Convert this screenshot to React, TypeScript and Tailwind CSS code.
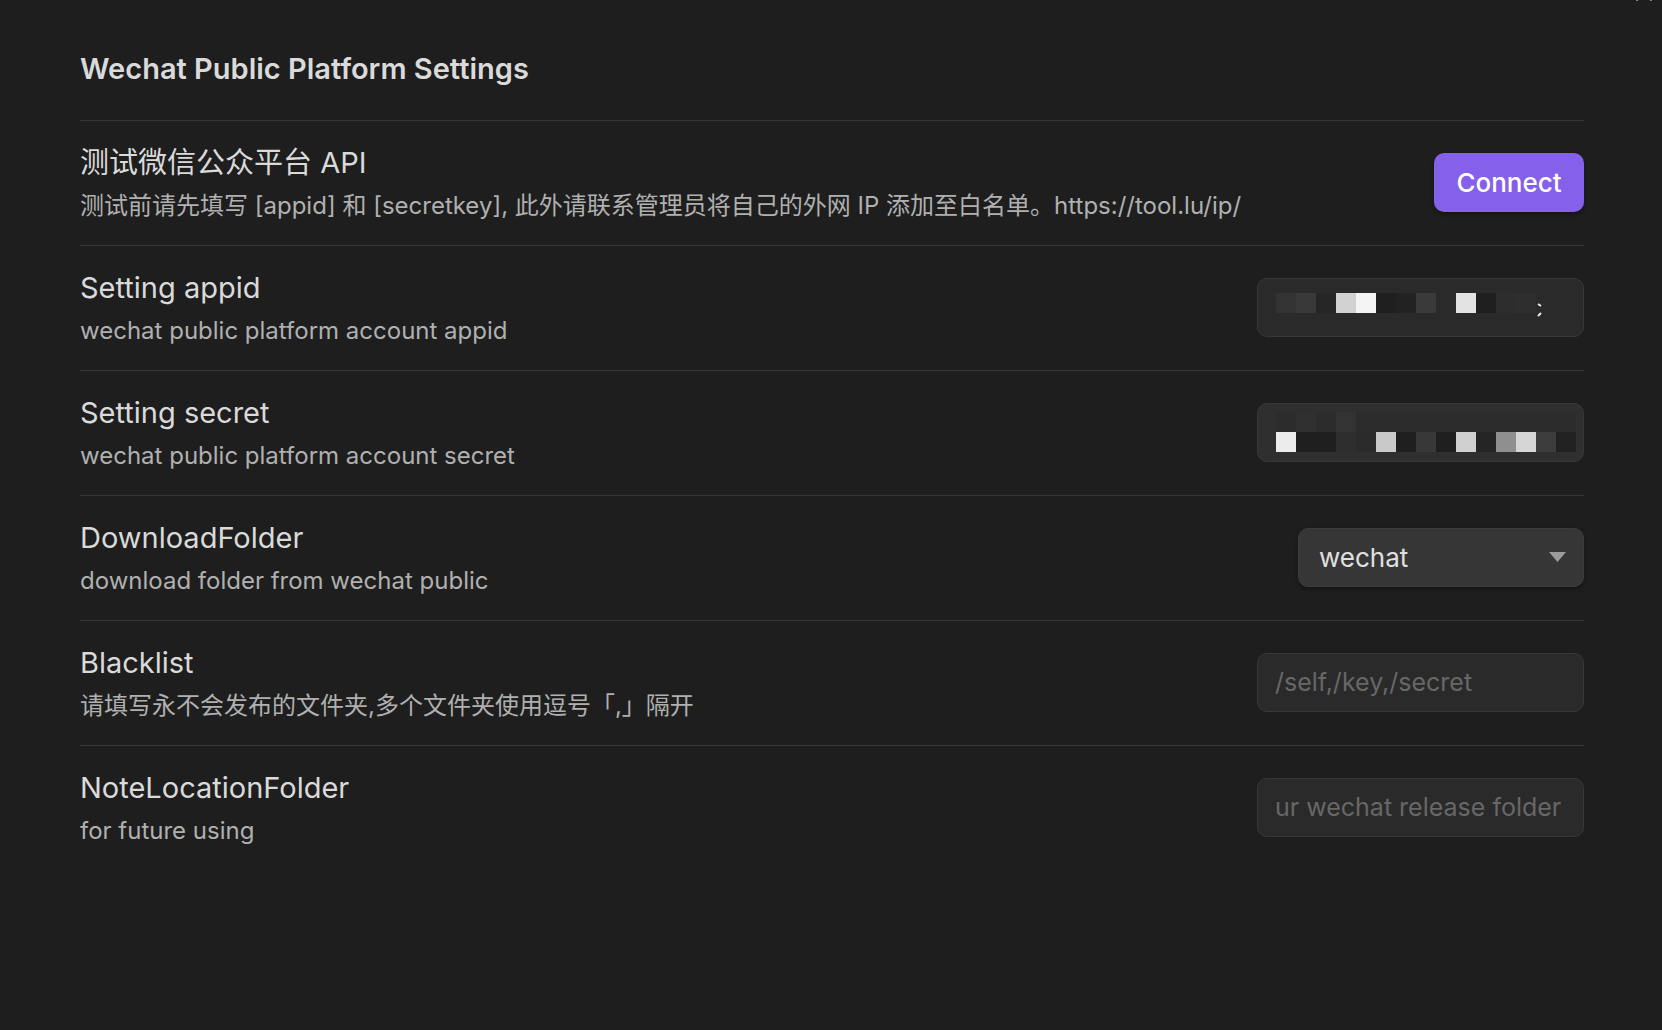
import type { ReactNode } from 'react'

const appidBlocks = [
  'bg-[#333333]',
  'bg-[#393939]',
  'bg-[#262626]',
  'bg-[#d2d2d2]',
  'bg-[#f4f4f4]',
  'bg-[#1f1f1f]',
  'bg-[#222222]',
  'bg-[#3a3a3a]',
  'bg-[#2a2a2a]',
  'bg-[#e3e3e3]',
  'bg-[#1f1f1f]',
  'bg-[#2d2d2d]',
  'bg-[#2e2e2e]',
]

const secretTop = [
  'bg-[#2c2c2c]',
  'bg-[#303030]',
  'bg-[#2c2c2c]',
  'bg-[#333333]',
  'bg-[#2c2c2c]',
  'bg-[#2c2c2c]',
  'bg-[#2c2c2c]',
  'bg-[#2c2c2c]',
  'bg-[#2c2c2c]',
  'bg-[#2c2c2c]',
  'bg-[#2c2c2c]',
  'bg-[#2c2c2c]',
  'bg-[#2c2c2c]',
  'bg-[#2c2c2c]',
  'bg-[#2c2c2c]',
]

const secretBottom = [
  'bg-[#ececec]',
  'bg-[#1f1f1f]',
  'bg-[#1f1f1f]',
  'bg-[#2e2e2e]',
  'bg-[#2a2a2a]',
  'bg-[#c9c9c9]',
  'bg-[#1f1f1f]',
  'bg-[#383838]',
  'bg-[#1f1f1f]',
  'bg-[#d0d0d0]',
  'bg-[#252525]',
  'bg-[#8f8f8f]',
  'bg-[#d6d6d6]',
  'bg-[#3d3d3d]',
  'bg-[#222222]',
]

function SettingRow({
  name,
  desc,
  children,
}: {
  name: string
  desc: string
  children: ReactNode
}) {
  return (
    <div className="flex items-center gap-8 border-t border-[#363636] pt-[23px] pb-[22px]">
      <div className="min-w-0 flex-1">
        <div className="text-[29px] leading-[38px] text-[#dadada]">{name}</div>
        <div className="mt-[7px] text-[24px] leading-[34px] text-[#b0b0b0]">{desc}</div>
      </div>
      <div className="mb-[3px] shrink-0">{children}</div>
    </div>
  )
}

function TextInput({ placeholder }: { placeholder: string }) {
  return (
    <input
      type="text"
      placeholder={placeholder}
      className="h-[59px] w-[327px] rounded-[10px] border border-[#383838] bg-[#2a2a2a] px-[17px] text-[25px] text-[#dadada] outline-none placeholder:text-[#676767]"
    />
  )
}

export default function App() {
  return (
    <div className="relative min-h-screen overflow-hidden bg-[#1e1e1e] font-[Inter,'Noto_Sans_CJK_SC',sans-serif]">
      {/* close button, mostly cut off */}
      <svg
        className="absolute right-[9px] top-[-16px]"
        width="18"
        height="18"
        viewBox="0 0 18 18"
        fill="none"
        stroke="#9a9a9a"
        strokeWidth="2"
        strokeLinecap="round"
      >
        <path d="M2 2l14 14M16 2L2 16" />
      </svg>

      <div className="pl-[80px] pr-[78px]">
        <h2 className="pt-[49px] pb-[31px] text-[29px] leading-[40px] font-semibold text-[#dadada]">
          Wechat Public Platform Settings
        </h2>

        <SettingRow
          name="测试微信公众平台 API"
          desc="测试前请先填写 [appid] 和 [secretkey], 此外请联系管理员将自己的外网 IP 添加至白名单。https://tool.lu/ip/"
        >
          <button className="h-[59px] w-[150px] rounded-[10px] bg-[#8560ea] text-[26px] font-medium text-white shadow-[0_2px_4px_rgba(0,0,0,0.35)]">
            Connect
          </button>
        </SettingRow>

        <SettingRow name="Setting appid" desc="wechat public platform account appid">
          <div className="flex h-[59px] w-[327px] items-start overflow-hidden rounded-[10px] border border-[#383838] bg-[#2a2a2a] pl-[18px] pt-[14px]">
            {appidBlocks.map((c, i) => (
              <div key={i} className={`h-5 w-5 shrink-0 ${c}`} />
            ))}
            <svg className="ml-[1px] mt-[10px] shrink-0" width="6" height="14" viewBox="0 0 6 14" fill="none" stroke="#e8e8e8" strokeWidth="2">
              <path d="M1 1l3 2M4 10l-3 3" />
            </svg>
          </div>
        </SettingRow>

        <SettingRow name="Setting secret" desc="wechat public platform account secret">
          <div className="h-[59px] w-[327px] overflow-hidden rounded-[10px] border border-[#383838] bg-[#2f2f2f] pl-[18px] pt-[8px]">
            <div className="flex">
              {secretTop.map((c, i) => (
                <div key={i} className={`h-5 w-5 shrink-0 ${c}`} />
              ))}
            </div>
            <div className="flex">
              {secretBottom.map((c, i) => (
                <div key={i} className={`h-5 w-5 shrink-0 ${c}`} />
              ))}
            </div>
          </div>
        </SettingRow>

        <SettingRow name="DownloadFolder" desc="download folder from wechat public">
          <div className="flex h-[59px] w-[286px] items-center justify-between rounded-[10px] border border-[#3c3c3c] bg-[#363636] pl-[20px] pr-[17px] shadow-[0_2px_4px_rgba(0,0,0,0.35)]">
            <span className="text-[26px] text-[#e0e0e0]">wechat</span>
            <svg width="17" height="10" viewBox="0 0 17 10">
              <path d="M0 0h17L8.5 10z" fill="#9c9c9c" />
            </svg>
          </div>
        </SettingRow>

        <SettingRow name="Blacklist" desc="请填写永不会发布的文件夹,多个文件夹使用逗号「,」隔开">
          <TextInput placeholder="/self,/key,/secret" />
        </SettingRow>

        <div className="flex items-center gap-8 border-t border-[#363636] pt-[23px] pb-[22px]">
          <div className="min-w-0 flex-1">
            <div className="text-[29px] leading-[38px] text-[#dadada]">NoteLocationFolder</div>
            <div className="mt-[7px] text-[24px] leading-[34px] text-[#b0b0b0]">for future using</div>
          </div>
          <div className="mb-[3px] shrink-0">
            <TextInput placeholder="ur wechat release folder" />
          </div>
        </div>
      </div>
    </div>
  )
}
